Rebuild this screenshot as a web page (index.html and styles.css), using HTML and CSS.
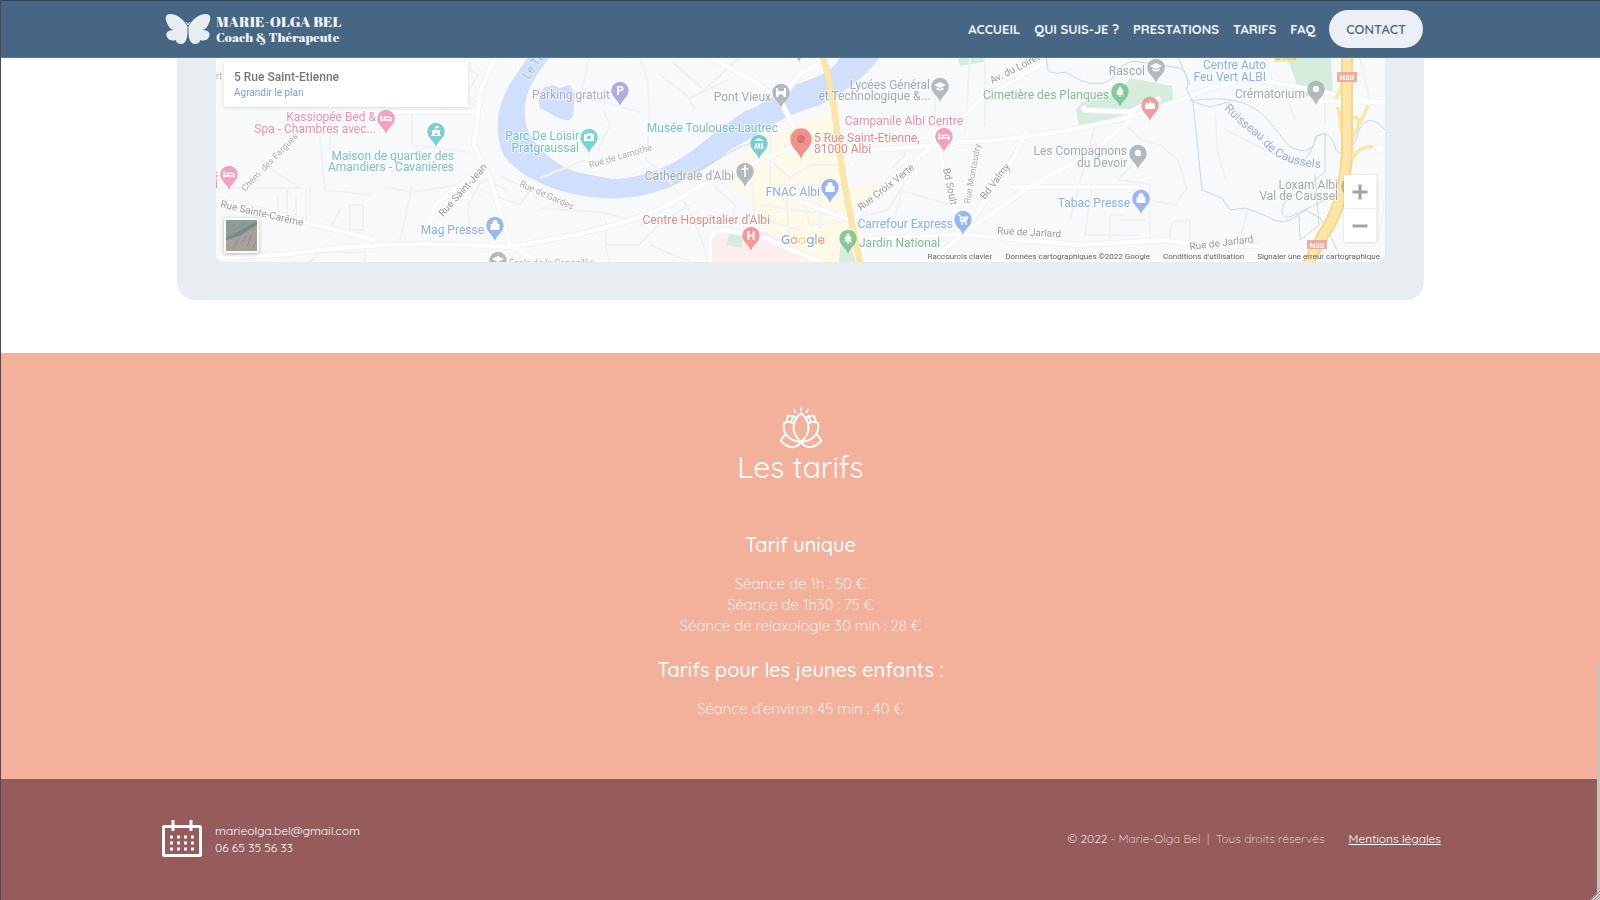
FILE: index.html
```html
<!DOCTYPE html>
<html lang="fr">
<head>
<meta charset="utf-8">
<meta name="viewport" content="width=device-width, initial-scale=1">
<title>Marie-Olga Bel - Coach &amp; Thérapeute</title>
<link rel="stylesheet" href="styles.css">
</head>
<body>
<header class="header">
  <a class="brand" href="#accueil">
    <svg class="brand-icon" viewBox="0 0 46 32" aria-hidden="true">
      <path d="M23 15C20 7 12 1 5 1C0 1 0 6 2 10C4 15 6 16 8 17C3 17 0 20 2 24C4 28 8 28 11 27C11 30 14 31 17 31C21 30 22 25 23 20C24 25 25 30 29 31C32 31 35 30 35 27C38 28 42 28 44 24C46 20 43 17 38 17C40 16 42 15 44 10C46 6 46 1 41 1C34 1 26 7 23 15Z"/>
      <path class="wing-gap" d="M23 15V27"/>
      <path class="antennae" d="M21 9L23 12L25 9"/>
    </svg>
    <span class="brand-text"><span class="brand-name">MARIE-OLGA BEL</span><span class="brand-role">Coach &amp; Thérapeute</span></span>
  </a>
  <nav class="nav">
    <a href="#accueil">ACCUEIL</a>
    <a href="#qui">QUI SUIS-JE ?</a>
    <a href="#prestations">PRESTATIONS</a>
    <a href="#tarifs">TARIFS</a>
    <a href="#faq">FAQ</a>
    <a class="nav-contact" href="#contact">CONTACT</a>
  </nav>
</header>
<main>
<section class="place">
  <div class="place-card">
    <div class="map">
      <svg class="map-canvas" viewBox="216 57 1169 205" preserveAspectRatio="xMidYMax slice" role="img" aria-label="Plan d'Albi">
        <defs>
          <path id="pin" d="M0 0C-1.500-6-8.700-9-8.700-15.600A8.700 8.700 0 0 1 8.700-15.600C8.700-9 1.500-6 0 0Z"/>
          <path id="bed" d="M-5-19V-12.500M-5-14H5V-12.500M5-14V-15.500Q5-17-1-17V-14M-3.500-16.500H-2.500" fill="none" stroke="#fff" stroke-width="1.500"/>
          <path id="bag" d="M-4.500-17H4.500V-11H-4.500ZM-2-17V-20H2V-17" fill="#fff" fill-rule="evenodd"/>
          <path id="handle" d="M-2-17V-18.500A2 2 0 0 1 2-18.500V-17" fill="none" stroke="#fff" stroke-width="1.200"/>
          <path id="cap" d="M-6-17L0-20L6-17L0-14ZM-3.500-14.500V-12.500Q0-10.500 3.500-12.500V-14.500L0-13Z" fill="#fff"/>
          <circle id="dot" cx="0" cy="-16" r="3.200" fill="#fff"/>
          <path id="tree" d="M0-21L-4-15H-2L-4-12H-.7V-10H.7V-12H4L2-15H4Z" fill="#fff"/>
        </defs>
        <rect class="land" x="216" y="57" width="1169" height="205"/>
        <g class="town">
          <path d="M740 157L762 137L800 125L832 112L842 160L862 262H775L770 235L745 195L725 180Z"/>
          <path d="M845 190L880 180L868 203L852 210Z"/>
        </g>
        <path class="hospital" d="M710 262V241Q711 231 722 231H765L800 250V262Z"/>
        <g class="park">
          <path d="M729 232L744 234L742 248L727 245Z"/>
          <path d="M958 57H986L983 62L960 66Z"/>
          <path d="M1081 103L1120 93L1130 78L1172 86L1173 101L1125 122L1079 126L1076 110Z"/>
          <path d="M1287 57H1331L1333 94L1301 97Z"/>
          <path d="M840 248L848 238L856 262H839Z"/>
        </g>
        <g class="water">
          <path d="M528 57L510 84Q490 117 502 152Q512 172 552 188Q615 209 667 188Q705 172 730 150L757 135Q780 117 820 105Q860 85 880 57H840Q833 73 800 83C770 93 765 105 745 111Q727 123 693 150Q655 178 613 179L580 173Q553 166 533 140Q518 117 530 87Q537 73 550 57Z"/>
          <path d="M545 87L553 85L560 88L570 85L575 94L573 116Q570 124 557 117L540 108Q536 97 545 87Z"/>
        </g>
        <g class="lanes">
          <path d="M460 63L478 75L466 95L482 105M412 112V145L470 152M320 135L325 190L372 195M310 187V215M265 165L300 188H216M330 110V150M278 195V220M287 190V222M296 196V220M306 190V224M350 205V230H363V205ZM340 210L328 232M412 187L400 240M385 187L410 192L440 188L485 180L508 190M216 262L240 250L282 254M482 180L468 205L470 230M590 57L580 96L640 112M640 57Q655 90 646 160Q690 190 708 262M603 110L610 125L598 150M585 160L540 178M660 75L690 98L728 80M672 62L700 85M688 97L695 110M740 57L704 90L680 70M606 221V245L637 245M637 247L658 225L690 205M605 247L610 262M480 190L520 205L530 190L500 176M540 208L600 212L632 220M715 187L735 205L730 235M750 160L755 220M770 160L790 178L810 165L850 165M770 130V185H842M783 145L830 140M800 190L810 225L845 222M760 205L830 215M785 180L790 245M820 180V228M748 215L800 230M890 170L905 155L900 145M860 217L888 210L900 190L950 205M898 172L880 185M905 177L895 218M935 90V130M970 57L965 132M985 62V127M1026 132L1020 145L1000 170M1095 126L1070 220M1128 127L1142 140L1160 145L1178 160L1187 188L1175 205L1150 200M1132 165L1118 180L1150 184V240M1092 185L1085 235H1140M1110 245V215H1125M1168 245L1172 222L1190 220V245M1145 220H1120M1248 207L1243 230L1232 243M1215 115L1218 155L1226 180M1226 130L1265 150M1285 95L1296 120M1264 57L1278 95M1325 94V125M1360 57L1370 103M1350 175H1378V240L1385 200M310 262L320 252H365V262M650 245L690 262M640 225L700 212"/>
        </g>
        <g class="road-edge"><use href="#roads"/></g>
        <g class="road"><g id="roads">
          <path d="M216 258L290 254Q380 240 490 246L510 247L575 235Q640 220 670 204L700 186L790 148L842 151Q900 150 960 142Q1010 141 1080 128Q1150 115 1210 88L1250 78L1385 104"/>
          <path d="M495 57L480 92L478 112H385M478 112L474 145L490 178L510 245L540 262M216 200L260 210L320 226L375 240M425 238L435 205L482 168"/>
          <path d="M710 57L760 85L780 100L794 127M780 100L800 74L830 57M855 218L890 180L938 142Q960 120 980 100L1045 62M938 142L945 180L963 230M963 234L1025 190L1095 150L1130 120M963 234L1000 238L1080 245L1165 240L1200 246H1260M963 234L860 240M1010 187H1140M963 234L930 262M1026 132L1013 160L965 230M770 190L850 220M1325 101L1385 102"/>
          <path d="M710 262V240Q712 230 725 230L765 238L820 262M1083 106L1085 110L1130 112L1160 98"/>
        </g></g>
        <g class="stream">
          <path d="M1046 57L1048 70Q1053 75 1065 72L1080 80Q1102 90 1116 75Q1125 58 1140 62L1180 68Q1190 73 1187 90L1193 102L1202 190L1222 198L1230 210L1245 208L1262 214Q1280 225 1290 220L1306 210L1320 218L1330 235L1337 250"/>
          <path d="M1193 102L1210 107L1229 102L1270 152Q1302 168 1310 153L1317 136Q1330 128 1336 150L1345 157Q1355 145 1360 128Q1370 112 1385 130"/>
        </g>
        <path class="trail" d="M1190 101Q1245 92 1268 120L1290 147Q1313 158 1316 136L1325 134V172L1284 203Q1278 219 1290 217L1325 200M1315 174L1319 225L1300 240L1299 216M1178 57L1190 85M667 188L740 147L765 138"/>
        <g class="highway-edge"><use href="#motorway"/></g>
        <g class="highway"><g id="motorway">
          <path d="M823 57Q832 87 837 130Q842 180 860 262" class="avenue"/>
          <path d="M1347 52V150Q1345 205 1323 235L1309 262" class="trunk"/>
          <path d="M1345 77L1336 99M1338 107L1344 145M1368 106L1353 137Q1365 115 1353 118M1373 147Q1354 144 1347 175" class="ramp"/>
        </g></g>
        <path class="trunk-lines" d="M1342 57V150Q1340 203 1318 233L1304 262M1352 57V150Q1350 207 1328 237L1314 262"/>
        <circle class="round" cx="1380" cy="149" r="5"/>
        <g class="pins">
          <g transform="translate(386 134)" fill="#f490b3"><use href="#pin"/><use href="#bed"/></g>
          <g transform="translate(229 190)" fill="#f490b3"><use href="#pin"/><use href="#bed"/></g>
          <g transform="translate(436 147)" fill="#65c8ce"><use href="#pin"/><path d="M-5-11V-12H-4V-17H-1V-21H3V-19H0V-17H4V-12H5V-11ZM-1-12H1V-14H-1Z" fill="#fff" fill-rule="evenodd"/></g>
          <g transform="translate(495 241)" fill="#85aaf3"><use href="#pin"/><use href="#bag"/><use href="#handle"/></g>
          <g transform="translate(498 276)" fill="#a6afb5"><use href="#pin"/><use href="#cap"/></g>
          <g transform="translate(620 106)" fill="#a39fd7"><use href="#pin"/><text class="pin-letter" y="-11">P</text></g>
          <g transform="translate(589 153)" fill="#65cfd0"><use href="#pin"/><path d="M-5-19H-2L-1-20H2L3-19H5V-12H-5Z" fill="#fff"/><circle cy="-15.500" r="2"/></g>
          <g transform="translate(781 108)" fill="#a6afb5"><use href="#pin"/><path d="M-5-11V-20H-3V-17H3V-20H5V-11H3Q0-17-3-11Z" fill="#fff"/></g>
          <g transform="translate(799 62)" fill="#65c8ce"><use href="#pin"/></g>
          <g transform="translate(759 159)" fill="#5bc8c8"><use href="#pin"/><path d="M-5-18L0-21L5-18ZM-4-16H-2V-12H-4ZM-1-16H1V-12H-1ZM2-16H4V-12H2ZM-5-11.500H5V-10.500H-5Z" fill="#fff"/></g>
          <g transform="translate(745 187)" fill="#a6afb5"><use href="#pin"/><path d="M0-22V-10M-3.500-18H3.500" stroke="#fff" stroke-width="1.600"/></g>
          <g transform="translate(751 251)" fill="#f28a89"><use href="#pin"/><text class="pin-letter" y="-11">H</text></g>
          <g transform="translate(801 159)" fill="#f07f7a"><path d="M0 0C-2-8-10.700-11-10.700-20A10.700 10.700 0 0 1 10.700-20C10.700-11 2-8 0 0Z"/><circle cy="-20" r="4" fill="#c9605e"/></g>
          <g transform="translate(830 203)" fill="#85aaf3"><use href="#pin"/><use href="#bag"/><use href="#handle"/></g>
          <g transform="translate(848 254)" fill="#72c38b"><use href="#pin"/><use href="#tree"/></g>
          <g transform="translate(940 102)" fill="#a6afb5"><use href="#pin"/><use href="#cap"/></g>
          <g transform="translate(944 152)" fill="#f490b3"><use href="#pin"/><use href="#bed"/></g>
          <g transform="translate(963 235)" fill="#85aaf3"><use href="#pin"/><path d="M-5-20H-3L-2-13H4M-3-18H5L4-15H-2" fill="#fff" stroke="#fff"/><circle cx="-1" cy="-11" r="1" fill="#fff"/><circle cx="3" cy="-11" r="1" fill="#fff"/></g>
          <g transform="translate(1156 83)" fill="#a6afb5"><use href="#pin"/><use href="#cap"/></g>
          <g transform="translate(1120 107)" fill="#72c38b"><use href="#pin"/><use href="#tree"/></g>
          <g transform="translate(1150 121)" fill="#f58c8c"><use href="#pin"/><path d="M-5-18H-1L1-21V-18H5V-12H-5Z" fill="#fff"/></g>
          <g transform="translate(1316 105)" fill="#a6afb5"><use href="#pin"/><use href="#dot"/></g>
          <g transform="translate(1138 169)" fill="#a6afb5"><use href="#pin"/><use href="#dot"/></g>
          <g transform="translate(1141 214)" fill="#85aaf3"><use href="#pin"/><use href="#bag"/><use href="#handle"/></g>
          <g transform="translate(1350 202)" fill="#a6afb5"><use href="#pin"/></g>
        </g>
        <g class="labels">
          <g class="pink end"><text x="376" y="121">Kassiopée Bed &amp;</text><text x="376" y="133">Spa - Chambres avec...</text><text x="963" y="125">Campanile Albi Centre</text><text x="218" y="178">s</text><text x="218" y="188">i</text></g>
          <g class="teal end"><text x="454" y="160">Maison de quartier des</text><text x="454" y="171">Amandiers - Cavanières</text><text x="579" y="140">Parc De Loisir</text><text x="579" y="152">Pratgraussal</text><text x="778" y="132">Musée Toulouse-Lautrec</text></g>
          <g class="blue end"><text x="484" y="234">Mag Presse</text><text x="820" y="196">FNAC Albi</text><text x="953" y="228">Carrefour Express</text><text x="1130" y="207">Tabac Presse</text><text x="1266" y="69">Centre Auto</text><text x="1266" y="81">Feu Vert ALBI</text></g>
          <text class="violet end" x="610" y="99">Parking gratuit</text>
          <g class="grey end"><text x="771" y="101">Pont Vieux</text><text x="734" y="180">Cathédrale d'Albi</text><text x="930" y="89">Lycées Général</text><text x="930" y="100">et Technologique &amp;...</text><text x="1145" y="75">Rascol</text><text x="1305" y="98">Crématorium</text><text x="1127" y="155">Les Compagnons</text><text x="1127" y="167">du Devoir</text><text x="1338" y="189">Loxam Albi</text><text x="1338" y="200">Val de Caussel</text></g>
          <g class="red"><text x="814" y="142">5 Rue Saint-Etienne,</text><text x="814" y="153">81000 Albi</text><text class="end" x="770" y="224">Centre Hospitalier d'Albi</text></g>
          <g class="green"><text class="end" x="1109" y="99">Cimetière des Planques</text><text x="859" y="247">Jardin National</text></g>
          <g class="street">
            <text transform="translate(220 207) rotate(13)">Rue Sainte-Carême</text>
            <text transform="translate(443 217) rotate(-48)">Rue Saint-Jean</text>
            <text transform="translate(861 211) rotate(-38)">Rue Croix Verte</text>
            <text transform="translate(943 169) rotate(78)">Bd Soult</text>
            <text transform="translate(985 200) rotate(-53)">Bd Valmy</text>
            <text transform="translate(992 84) rotate(-27)">Av. du Loiret</text>
            <text transform="translate(997 234) rotate(3)">Rue de Jarlard</text>
            <text transform="translate(1190 250) rotate(-7)">Rue de Jarlard</text>
          </g>
          <g class="street small">
            <text transform="translate(245 192) rotate(-46)">Chem. des Fargues</text>
            <text transform="translate(519 186) rotate(24)">Rue de Gardes</text>
            <text transform="translate(590 168) rotate(-16)">Rue de Lamothe</text>
            <text transform="translate(970 204) rotate(-80)">Rue Montaudry</text>
            <text x="216" y="79">rt</text>
            <text x="509" y="266">École de la Connaillié</text>
          </g>
          <text class="river" transform="translate(529 80) rotate(-57)">Le Tarn</text>
          <path id="brook" d="M1224 109Q1245 130 1260 140Q1276 165 1320 168" fill="none"/>
          <text class="river"><textPath href="#brook">Ruisseau de Caussels</textPath></text>
          <g class="shield"><rect x="1337" y="72" width="20" height="10"/><text x="1347" y="80">N88</text><rect x="1307" y="240" width="20" height="9"/><text x="1317" y="248">N88</text></g>
          <text class="shield-d" x="1286" y="60">D100</text>
          <text class="google" x="781" y="244"><tspan fill="#7aa5ef">G</tspan><tspan fill="#f09089">o</tspan><tspan fill="#f7d36f">o</tspan><tspan fill="#7aa5ef">g</tspan><tspan fill="#7dc692">l</tspan><tspan fill="#f09089">e</tspan></text>
        </g>
      </svg>
      <div class="address">
        <strong>5 Rue Saint-Etienne</strong>
        <a href="#plan">Agrandir le plan</a>
      </div>
      <button class="satellite" type="button" aria-label="Vue satellite">
        <svg viewBox="0 0 32 32" aria-hidden="true"><rect width="32" height="32" fill="#a5a09c"/><path d="M0 0H32L18 9L0 18Z" fill="#8a9d98"/><path d="M0 18L14 11L32 1V5L15 16L0 21Z" fill="#748d89"/><path d="M4 27L9 22M12 25L16 19M19 29L23 20M25 24L29 17M14 30L18 27M2 24L6 21M20 15L26 11" stroke="#b5a8a2" stroke-width="1"/><path d="M7 30L12 21M22 27L26 15M16 23L21 17M28 29L31 22M3 9L10 4M14 6L21 3" stroke="#8f8d88" stroke-width="1"/></svg>
      </button>
      <div class="zoom">
        <button type="button" aria-label="Zoom avant"><svg viewBox="0 0 16 16"><path d="M8 0.500V15.500M0.500 8H15.500"/></svg></button>
        <button type="button" aria-label="Zoom arrière"><svg viewBox="0 0 16 16"><path d="M0.500 8H15.500"/></svg></button>
      </div>
      <div class="map-legal"><button type="button">Raccourcis clavier</button><span>Données cartographiques ©2022 Google</span><a href="#conditions">Conditions d'utilisation</a><a href="#erreur">Signaler une erreur cartographique</a></div>
    </div>
  </div>
</section>
<section class="prices" id="tarifs">
  <svg class="lotus" viewBox="0 0 42 42" aria-hidden="true">
    <path d="M21 6C11 15 11 26 21 35C31 26 31 15 21 6ZM14 16Q8 14 4 16C2 26 9 34 21 35C33 34 40 26 38 16Q34 14 28 16M6 15L8 9Q12 8 16 11M11 15L13 10M36 15L34 9Q30 8 26 11M31 15L29 10M5 28Q2 30 1 34C8 42 16 42 21 35C26 42 34 42 41 34Q40 30 37 28M21 1V3M14 3L15.500 5M28 3L26.500 5"/>
  </svg>
  <h1>Les tarifs</h1>
  <h2>Tarif unique</h2>
  <p>Séance de 1h : 50 €<br>Séance de 1h30 : 75 €<br>Séance de relaxologie 30 min : 28 €</p>
  <h2>Tarifs pour les jeunes enfants :</h2>
  <p>Séance d’environ 45 min : 40 €</p>
</section>
</main>
<footer class="footer" id="contact">
  <div class="contact">
    <svg class="calendar" viewBox="0 0 40 37" aria-hidden="true">
      <rect x="1.500" y="6.500" width="37" height="29" rx="1"/>
      <path d="M11 0V11M29 0V11"/>
      <path class="days" d="M8 17H33M8 23H33M8 29H33"/>
    </svg>
    <address><a href="mailto:marieolga.bel@gmail.com">marieolga.bel@gmail.com</a><a href="tel:0665355633">06 65 35 56 33</a></address>
  </div>
  <div class="legal"><span><span class="year">© 2022</span> - Marie-Olga Bel &nbsp;|&nbsp; Tous droits réservés</span><a href="#mentions">Mentions légales</a></div>
</footer>
<div class="scroll-thumb"></div>
<svg class="grip" viewBox="0 0 10 10" aria-hidden="true"><path d="M0 10L10 0V10Z"/><path class="grip-lines" d="M1 10L10 1M4 10L10 4M7 10L10 7"/></svg>
</body>
</html>
```

FILE: styles.css
```css
* { box-sizing: border-box; }
body {
  margin: 0;
  min-height: 100vh;
  display: flex;
  flex-direction: column;
  font-family: Quicksand, Lato, "Open Sans", sans-serif;
  color: #fff;
  background: #fff;
  border-left: 1px solid #4b4b55;
}
a { color: inherit; text-decoration: none; }
button { font: inherit; color: inherit; border: 0; padding: 0; cursor: pointer; }

.header {
  display: flex;
  align-items: center;
  justify-content: space-between;
  min-height: 58px;
  padding: 0 177px 0 164px;
  color: #f0f4f7;
  background: #466683;
  border-top: 1px solid #2e4358;
  border-bottom: 1px solid #5b7690;
}
.brand { display: flex; align-items: center; gap: 5px; }
.brand-icon { width: 46px; height: 32px; fill: #e8edf2; }
.wing-gap, .antennae { fill: none; stroke: #466683; stroke-width: 1; }
.antennae { stroke: #e8edf2; }
.brand-text { display: flex; flex-direction: column; font-family: "Abril Fatface", "Liberation Serif", serif; font-weight: 400; line-height: 16px; white-space: nowrap; }
.brand-name { font-size: 15px; }
.brand-role { font-size: 13px; }
.nav { display: flex; align-items: center; gap: 14px; font-size: 13px; font-weight: 700; white-space: nowrap; }
.nav-contact {
  padding: 0 17px;
  line-height: 38px;
  font-weight: 600;
  color: #466683;
  background: #ecf0f4;
  border-radius: 19px;
}

.place { padding: 0 176px 53px; }
.place-card { padding: 0 39px 38px; background: #e8edf2; border-radius: 0 0 18px 18px; }
.map { position: relative; height: 204px; overflow: hidden; border-radius: 0 0 8px 8px; font-family: Roboto, sans-serif; }
.map-canvas { display: block; width: 100%; height: 100%; }
.land { fill: #f8f9fb; }
.town { fill: #fff9e8; }
.hospital { fill: #fdeeee; }
.park { fill: #d6eddd; }
.water { fill: #cfdffc; }
.lanes, .road, .road-edge { fill: none; stroke: #fff; stroke-linejoin: round; }
.lanes { stroke: #f1f2f5; stroke-width: 2; }
.road-edge { stroke: #f0f2f5; stroke-width: 6; }
.road { stroke-width: 4; }
.stream { fill: none; stroke: #c3d5f8; stroke-width: 1; }
.trail { fill: none; stroke: #c2e0ce; stroke-width: 1; }
.highway, .highway-edge { fill: none; }
.highway-edge { stroke: #f6d48a; }
.highway { stroke: #fde5a8; }
.trunk-lines { fill: none; stroke: #f8d68c; stroke-width: 2; }
.avenue { stroke-width: 6; }
.trunk { stroke-width: 10; }
.ramp { stroke-width: 3; }
.round { fill: #fff; stroke: #eceef2; }
.pins { opacity: 0.85; }
.labels { opacity: 0.9; }
.labels text { font-size: 12px; paint-order: stroke; stroke: #ffffffb0; stroke-width: 2px; }
.labels .end, .end text { text-anchor: end; }
.pink { fill: #ec82a9; }
.teal { fill: #6dbbb9; }
.blue { fill: #7ca7e8; }
.violet { fill: #a29fce; }
.grey { fill: #98a0a6; }
.red { fill: #df7f7c; }
.green { fill: #74b586; }
.labels .street text { fill: #909090; font-size: 10px; }
.labels .small text { font-size: 9px; fill: #a5a5a5; }
.labels .river { fill: #86a8dd; font-size: 12px; }
.shield rect { fill: #eea49f; }
.labels .shield text { fill: #fff; font-size: 8px; font-weight: 700; stroke: none; text-anchor: middle; }
.labels .shield-d { fill: #b5ac7c; font-size: 9px; text-anchor: middle; stroke: #fae595; stroke-width: 4px; }
.labels .google { font-size: 13px; font-family: Quicksand, Lato, sans-serif; font-weight: 600; }
.pin-letter { fill: #fff; font-size: 12px; font-weight: 700; text-anchor: middle; }

.address {
  position: absolute;
  top: 4px;
  left: 8px;
  display: flex;
  flex-direction: column;
  width: 244px;
  padding: 6px 10px 8px;
  background: #fff;
  box-shadow: 0 1px 3px #0000001f;
  font-size: 12px;
  line-height: 18px;
}
.address strong { font-weight: 500; color: #777; }
.address a { font-size: 10px; line-height: 13px; color: #73a5df; }
.satellite { position: absolute; left: 8px; bottom: 9px; width: 35px; height: 35px; padding: 2px; background: #fff; border-radius: 2px; box-shadow: 0 1px 4px #00000040; }
.satellite svg { display: block; width: 100%; }
.zoom { position: absolute; right: 9px; bottom: 20px; display: grid; gap: 1px; background: #eee; border-radius: 2px; box-shadow: 0 1px 3px #0000001f; }
.zoom button { display: grid; place-items: center; width: 32px; height: 33px; background: #fff; }
.zoom svg { width: 16px; height: 16px; fill: none; stroke: #a3a3a3; stroke-width: 3; }
.map-legal { position: absolute; right: 5px; bottom: 0; display: flex; gap: 13px; color: #666; font-size: 8px; line-height: 11px; white-space: nowrap; }
.map-legal button { background: none; }

.prices {
  display: flex;
  flex-direction: column;
  align-items: center;
  padding: 54px 16px 60px;
  text-align: center;
  background: #f3b19b;
}
.lotus { width: 42px; height: 42px; fill: none; stroke: #fff; stroke-width: 2; stroke-linejoin: round; stroke-linecap: round; }
h1, h2, p { margin: 0; }
h1 { margin-bottom: 47px; font-size: 30px; line-height: 36px; font-weight: 400; }
h2 { margin-bottom: 15px; font-size: 20px; line-height: 26px; font-weight: 500; }
p { font-size: 15px; line-height: 21px; font-weight: 300; }
p + h2 { margin-top: 21px; }

.footer {
  flex: 1;
  display: flex;
  align-items: center;
  justify-content: space-between;
  min-height: 121px;
  padding: 0 159px 2px 161px;
  font-size: 12px;
  background: #955c5b;
}
.contact { display: flex; align-items: center; gap: 13px; }
.calendar { width: 40px; height: 37px; fill: none; stroke: #fff; stroke-width: 3; }
.days { stroke-dasharray: 3 4; }
address { display: flex; flex-direction: column; font-style: normal; line-height: 17px; }
.legal { display: flex; gap: 24px; color: #f0dfde; font-weight: 300; }
.legal .year { font-weight: 400; }
.legal a { color: #fff; font-weight: 400; text-decoration: underline; }
.scroll-thumb { position: fixed; right: 0; top: 664px; bottom: 0; width: 3px; background: #c6c2c2; }
.grip { position: fixed; right: 0; bottom: 0; width: 10px; height: 10px; fill: #d9d2d2; }
.grip-lines { fill: none; stroke: #8b7f7f; stroke-width: 1; }
```
